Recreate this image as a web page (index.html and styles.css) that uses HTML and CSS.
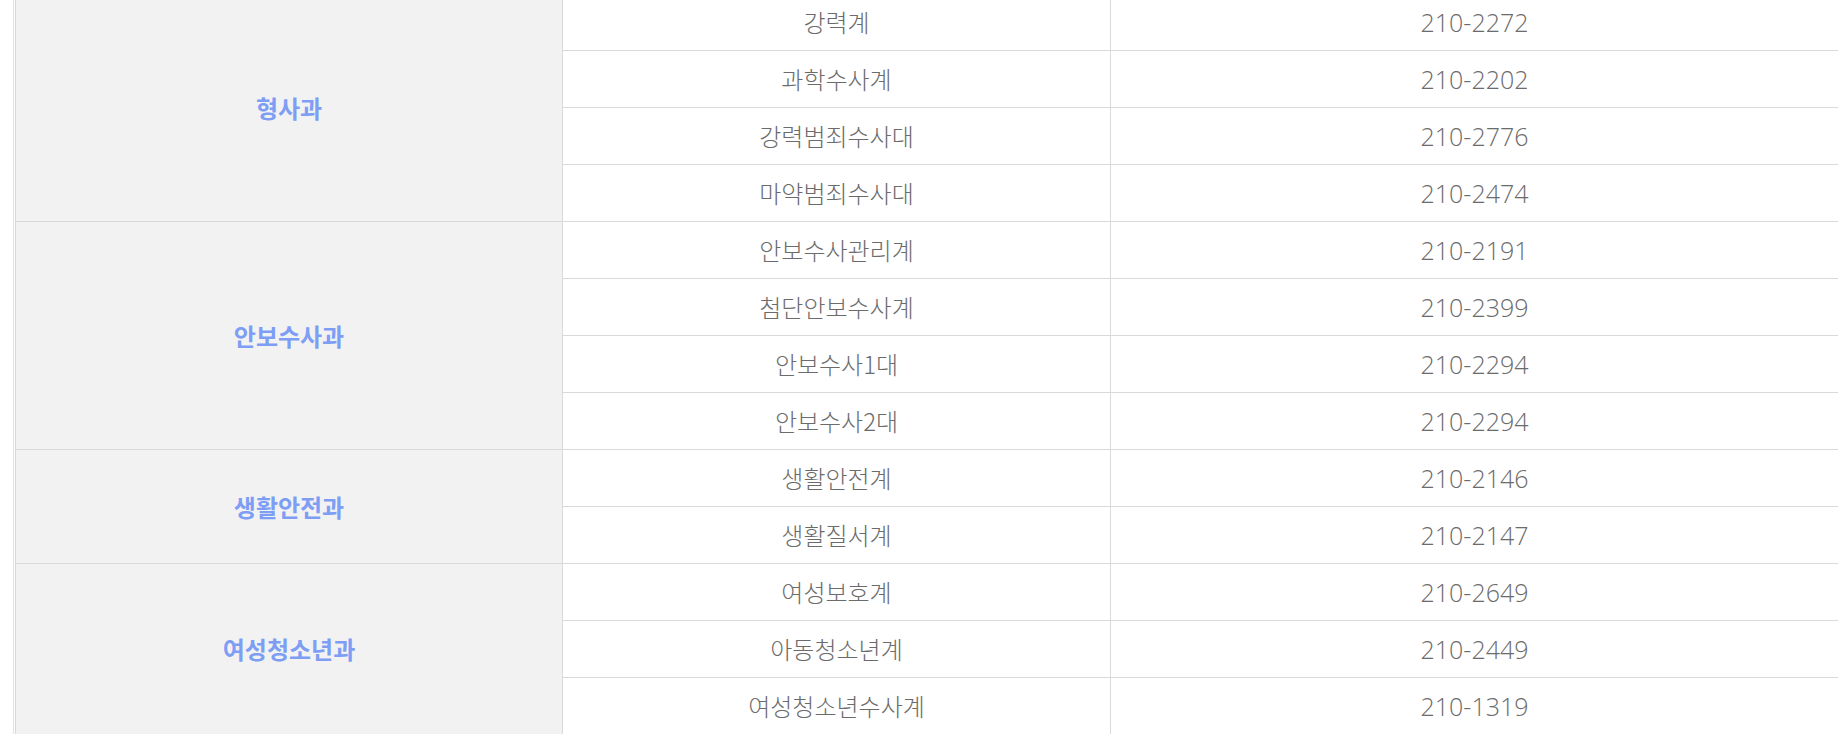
FILE: index.html
```html
<!doctype html>
<html lang="ko">
  <head>
    <meta charset="UTF-8" />
    <meta name="viewport" content="width=device-width, initial-scale=1.0" />
    <title>부서 전화번호</title>
    <link rel="stylesheet" href="styles.css">
  </head>
  <body>
    <div class="board">
      <table class="phone-table">
        <colgroup>
          <col class="col-dept" />
          <col class="col-team" />
          <col class="col-tel" />
        </colgroup>
        <tbody>
          <!-- 형사과 -->
          <tr>
            <th rowspan="4" class="dept">형사과</th>
            <td class="team">강력계</td>
            <td class="tel">210-2272</td>
          </tr>
          <tr>
            <td class="team">과학수사계</td>
            <td class="tel">210-2202</td>
          </tr>
          <tr>
            <td class="team">강력범죄수사대</td>
            <td class="tel">210-2776</td>
          </tr>
          <tr>
            <td class="team">마약범죄수사대</td>
            <td class="tel">210-2474</td>
          </tr>

          <!-- 안보수사과 -->
          <tr>
            <th rowspan="4" class="dept">안보수사과</th>
            <td class="team">안보수사관리계</td>
            <td class="tel">210-2191</td>
          </tr>
          <tr>
            <td class="team">첨단안보수사계</td>
            <td class="tel">210-2399</td>
          </tr>
          <tr>
            <td class="team">안보수사1대</td>
            <td class="tel">210-2294</td>
          </tr>
          <tr>
            <td class="team">안보수사2대</td>
            <td class="tel">210-2294</td>
          </tr>

          <!-- 생활안전과 -->
          <tr>
            <th rowspan="2" class="dept">생활안전과</th>
            <td class="team">생활안전계</td>
            <td class="tel">210-2146</td>
          </tr>
          <tr>
            <td class="team">생활질서계</td>
            <td class="tel">210-2147</td>
          </tr>

          <!-- 여성청소년과 -->
          <tr>
            <th rowspan="3" class="dept">여성청소년과</th>
            <td class="team">여성보호계</td>
            <td class="tel">210-2649</td>
          </tr>
          <tr>
            <td class="team">아동청소년계</td>
            <td class="tel">210-2449</td>
          </tr>
          <tr>
            <td class="team">여성청소년수사계</td>
            <td class="tel">210-1319</td>
          </tr>
        </tbody>
      </table>
    </div>
  </body>
</html>
```

FILE: styles.css
```css
html,
body {
  margin: 0;
  padding: 0;
  background-color: #fff;
  overflow: hidden;
}
body {
  font-family: "Noto Sans CJK KR", sans-serif;
  color: #6b6b6b;
}
.board {
  margin: -7px 0 0 13px;
  padding-left: 1px;
  border-left: 1px solid #e2e2e2;
}
.phone-table {
  width: 100%;
  table-layout: fixed;
  border-collapse: collapse;
}
.col-dept {
  width: 547px;
}
.col-team {
  width: 548px;
}
.phone-table th,
.phone-table td {
  height: 56px;
  padding: 0;
  border: 1px solid #d9d9d9;
  text-align: center;
  vertical-align: middle;
  line-height: 1;
}
.phone-table tr > :last-child {
  border-right: none;
}
.dept {
  background-color: #f2f2f2;
  color: #7d9ef4;
  font-size: 24px;
  font-weight: bold;
}
.team {
  font-size: 24px;
  font-weight: 300;
}
.tel {
  font-family: "Open Sans", "Noto Sans CJK KR", sans-serif;
  font-size: 25px;
  font-weight: 300;
  color: #6b6b6b;
}
```
